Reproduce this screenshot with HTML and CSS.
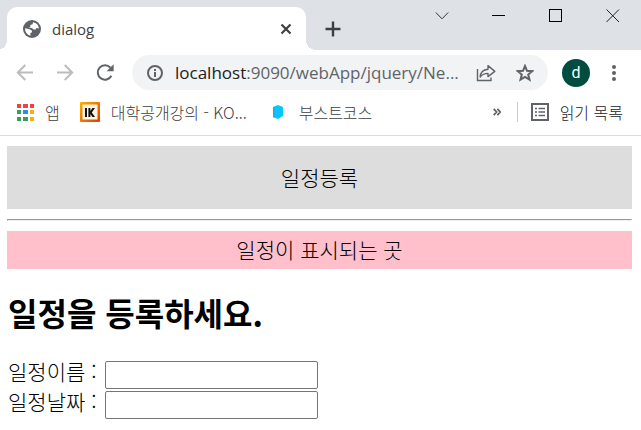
FILE: index.html
```html
<!DOCTYPE html>
<html lang="ko">
  <head>
    <meta charset="UTF-8" />
    <meta name="viewport" content="width=device-width, initial-scale=1.0" />
    <title>dialog</title>
    <link rel="stylesheet" href="styles.css">
  </head>
  <body>
    <header class="browser">
      <div class="tab-strip">
        <div class="tab">
          <svg class="tab-icon" width="18" height="18" viewBox="0 0 18 18">
            <circle cx="9" cy="9" r="9" fill="#5f6368" />
            <path d="M10 2.2 L9.6 4.2 L7.4 5 L7.2 7 L5.6 7.6 L8.8 8 L10.6 9.6 L12.6 9.6 L13.4 8 L15.9 8.4 A7 7 0 0 0 10 2.2Z" fill="#fff" />
            <path d="M2.1 8.3 L6.6 9.2 L8.8 10.6 L9 12.4 L7.4 12.8 L7.4 15.8 A7 7 0 0 1 2.1 8.3Z" fill="#fff" />
          </svg>
          <span class="tab-title">dialog</span>
          <button class="icon-btn" type="button" aria-label="Close tab">
            <svg width="12" height="12" viewBox="0 0 12 12">
              <path d="M1.5 1.5 L10.5 10.5 M10.5 1.5 L1.5 10.5" stroke="#3c4043" stroke-width="2.2" />
            </svg>
          </button>
        </div>
        <button class="icon-btn new-tab" type="button" aria-label="New tab">
          <svg width="16" height="16" viewBox="0 0 16 16">
            <path d="M8 .5 V15.5 M.5 8 H15.5" stroke="#3c4043" stroke-width="2.4" />
          </svg>
        </button>
        <div class="window-buttons">
          <button class="icon-btn" type="button" aria-label="Search tabs">
            <svg width="14" height="14" viewBox="0 0 14 14">
              <path d="M.8 3.5 L7 9.8 L13.2 3.5" fill="none" stroke="#333" />
            </svg>
          </button>
          <button class="icon-btn" type="button" aria-label="Minimize">
            <svg width="14" height="14" viewBox="0 0 14 14">
              <path d="M0 6.5 H13" stroke="#000" />
            </svg>
          </button>
          <button class="icon-btn" type="button" aria-label="Maximize">
            <svg width="14" height="14" viewBox="0 0 14 14">
              <rect x=".5" y=".5" width="12" height="12" fill="none" stroke="#000" />
            </svg>
          </button>
          <button class="icon-btn" type="button" aria-label="Close">
            <svg width="14" height="14" viewBox="0 0 14 14">
              <path d="M.5 .5 L13 13 M13 .5 L.5 13" stroke="#222" />
            </svg>
          </button>
        </div>
      </div>

      <div class="toolbar">
        <button class="icon-btn" type="button" aria-label="Back">
          <svg width="18" height="18" viewBox="0 0 18 18">
            <path d="M17 8.5 H2 M9.3 1 L1.8 8.5 L9.3 16" fill="none" stroke="#babcbe" stroke-width="2" />
          </svg>
        </button>
        <button class="icon-btn" type="button" aria-label="Forward">
          <svg width="18" height="18" viewBox="0 0 18 18">
            <path d="M1 8.5 H16 M8.7 1 L16.2 8.5 L8.7 16" fill="none" stroke="#babcbe" stroke-width="2" />
          </svg>
        </button>
        <button class="icon-btn" type="button" aria-label="Reload">
          <svg width="18" height="18" viewBox="0 0 18 18">
            <path d="M15.4 11.7 A7.2 7.2 0 1 1 14.4 3.7" fill="none" stroke="#5f6368" stroke-width="2" />
            <path d="M17.6 .3 V7.3 H10.6Z" fill="#5f6368" />
          </svg>
        </button>
        <div class="address">
          <svg width="16" height="16" viewBox="0 0 16 16">
            <circle cx="8" cy="8" r="7" fill="none" stroke="#5f6368" stroke-width="2" />
            <path d="M8 7 V12 M8 4 V6" stroke="#5f6368" stroke-width="2" />
          </svg>
          <span class="url">localhost<span class="path">:9090/webApp/jquery/Ne...</span></span>
          <button class="icon-btn" type="button" aria-label="Share">
            <svg width="20" height="18" viewBox="0 0 20 18">
              <path d="M1.5 5 V16.5 H15 V13.5" fill="none" stroke="#5f6368" stroke-width="1.4" />
              <path d="M4.2 13 C4.4 8.6 7 5.6 12 5.2 V1.6 L18.8 7.4 L12 12.6 V9.4 C8.4 9.4 6 10.6 4.2 13Z" fill="none" stroke="#5f6368" stroke-width="1.4" stroke-linejoin="round" />
            </svg>
          </button>
          <button class="icon-btn" type="button" aria-label="Bookmark this page">
            <svg width="18" height="18" viewBox="0 0 18 18">
              <path d="M9 2 L11 6.8 L16.2 7.2 L12.2 10.6 L13.5 15.7 L9 13 L4.5 15.7 L5.8 10.6 L1.8 7.2 L7 6.8Z" fill="none" stroke="#5f6368" stroke-width="2" />
            </svg>
          </button>
        </div>
        <button class="avatar" type="button">d</button>
        <button class="icon-btn" type="button" aria-label="Menu">
          <svg width="4" height="18" viewBox="0 0 4 18">
            <circle cx="2" cy="3" r="2" fill="#5f6368" />
            <circle cx="2" cy="9" r="2" fill="#5f6368" />
            <circle cx="2" cy="15" r="2" fill="#5f6368" />
          </svg>
        </button>
      </div>

      <nav class="bookmarks">
        <a href="#">
          <svg width="17" height="17" viewBox="0 0 17 17">
            <path d="M0 0 h4 v4 h-4z M6 0 h5 v4 h-5z M13 0 h4 v4 h-4z" fill="#f44040" />
            <path d="M0 6 h4 v4 h-4z M0 13 h4 v4 h-4z M6 13 h5 v4 h-5z" fill="#34a05c" />
            <path d="M6 6 h5 v4 h-5z" fill="#2a8cf0" />
            <path d="M13 6 h4 v4 h-4z M13 13 h4 v4 h-4z" fill="#fbae08" />
          </svg>
          앱
        </a>
        <a href="#">
          <svg width="20" height="20" viewBox="0 0 20 20">
            <defs>
              <linearGradient id="orange" x1="0" y1="0" x2="1" y2="1">
                <stop offset="0" stop-color="#ffb000" />
                <stop offset="1" stop-color="#e03c00" />
              </linearGradient>
            </defs>
            <rect width="20" height="20" rx="1" fill="url(#orange)" />
            <rect x="2.5" y="2.5" width="15" height="15" fill="#fff3e4" />
            <path d="M5 6 H7 V15 H5Z M8.4 6 H10.4 V9 L12.4 6 H15 L11.8 10.4 L15 15 H12.4 L10.4 12 V15 H8.4Z" fill="#111" />
          </svg>
          대학공개강의 - KO...
        </a>
        <a class="course" href="#">
          <svg width="10" height="14" viewBox="0 0 10 14">
            <path d="M0 2 L5 0 L10 2 V11 L5 14 L0 12Z" fill="#06c8ff" />
            <path d="M0 2 L2 2 V12.8 L0 12Z" fill="#1ab0f4" />
          </svg>
          부스트코스
        </a>
        <button class="icon-btn more" type="button" aria-label="More bookmarks">
          <svg width="8" height="8" viewBox="0 0 8 8">
            <path d="M.7 .8 L3.6 4 L.7 7.2 M4.4 .8 L7.3 4 L4.4 7.2" fill="none" stroke="#5f6368" stroke-width="1.8" />
          </svg>
        </button>
        <a class="reading-list" href="#">
          <svg width="18" height="18" viewBox="0 0 18 18">
            <rect x="1" y="1" width="16" height="16" fill="none" stroke="#5f6368" stroke-width="2" />
            <path d="M4 5.5 H6 M4 9 H6 M4 12.5 H6 M7.5 5.5 H14 M7.5 9 H14 M7.5 12.5 H14" stroke="#5f6368" stroke-width="1.6" />
          </svg>
          읽기 목록
        </a>
      </nav>
    </header>

    <main>
      <button class="add" type="button">일정등록</button>
      <hr />
      <div class="schedule">일정이 표시되는 곳</div>
      <h2>일정을 등록하세요.</h2>
      <form>
        <div class="field">
          <label for="name">일정이름 :</label>
          <input type="text" id="name" />
        </div>
        <div class="field">
          <label for="date">일정날짜 :</label>
          <input type="text" id="date" />
        </div>
      </form>
    </main>
  </body>
</html>
```
FILE: styles.css
```css
* {
  box-sizing: border-box;
}

body {
  margin: 0;
  background-color: white;
  color: black;
  font-family: "Noto Sans CJK KR", sans-serif;
  font-weight: 300;
}

svg {
  display: block;
  flex-shrink: 0;
}

button {
  font-family: inherit;
  font-weight: inherit;
  border: none;
  padding: 0;
  cursor: pointer;
}

.icon-btn {
  background: none;
}

.tab-strip {
  display: flex;
  height: 50px;
  padding-left: 7px;
  background-color: #dee1e6;
}

.tab {
  position: relative;
  display: flex;
  align-items: center;
  width: 299px;
  margin-top: 7px;
  padding: 0 14px 0 16px;
  background-color: white;
  border-radius: 10px 10px 0 0;
}

/* curved feet of the active tab */
.tab::before,
.tab::after {
  content: "";
  position: absolute;
  bottom: 0;
  width: 10px;
  height: 10px;
}

.tab::before {
  right: 100%;
  background: radial-gradient(circle at 0 0, transparent 10px, white 10px);
}

.tab::after {
  left: 100%;
  background: radial-gradient(circle at 100% 0, transparent 10px, white 10px);
}

.tab-title {
  flex: 1;
  margin-left: 11px;
  color: #3c4043;
  font-family: "Open Sans", sans-serif;
  font-size: 15px;
  font-weight: 400;
}

.new-tab {
  margin: 7px 0 0 19px;
}

.window-buttons {
  display: flex;
  gap: 43px;
  height: 32px;
  margin-left: auto;
  padding-right: 21px;
}

.toolbar {
  display: flex;
  align-items: center;
  height: 45px;
  padding: 0 25px 0 16px;
}

.toolbar > .icon-btn {
  margin-right: 22px;
}

.toolbar > .icon-btn:last-child {
  margin-right: 0;
}

.address {
  flex: 1;
  display: flex;
  align-items: center;
  min-width: 0;
  height: 35px;
  margin: 0 14px 0 -4px;
  padding: 0 14px 0 15px;
  background-color: #f1f3f4;
  border-radius: 18px;
}

.url {
  flex: 1;
  min-width: 0;
  margin-left: 12px;
  overflow: hidden;
  white-space: nowrap;
  color: #202124;
  font-family: "Open Sans", sans-serif;
  font-size: 17px;
  font-weight: 400;
}

.path {
  color: #5f6368;
}

.address .icon-btn + .icon-btn {
  margin-left: 20px;
}

.avatar {
  width: 28px;
  height: 28px;
  margin-right: 22px;
  background-color: #004d40;
  border-radius: 50%;
  color: white;
  font-family: Roboto, sans-serif;
  font-size: 16px;
  font-weight: 400;
}

.bookmarks {
  display: flex;
  align-items: center;
  height: 41px;
  padding: 0 18px 6px 17px;
  border-bottom: 1px solid #dadce0;
}

.bookmarks a {
  display: flex;
  align-items: center;
  gap: 11px;
  margin-right: 20px;
  color: #3c4043;
  font-size: 16px;
  line-height: 20px;
  text-decoration: none;
  white-space: nowrap;
}

.bookmarks .course {
  gap: 16px;
  margin: 0 0 0 6px;
}

.more {
  margin: 0 16px 0 auto;
}

.bookmarks .reading-list {
  margin-right: 0;
  padding-left: 13px;
  border-left: 1px solid #c8cacd;
  color: #202124;
}

main {
  padding: 10px 9px 8px 7px;
  font-size: 21px;
  line-height: 30px;
}

.add {
  display: block;
  width: 100%;
  padding: 16px 16px 17px;
  background-color: #ddd;
  color: black;
  font-size: 21px;
  line-height: 30px;
}

hr {
  margin: 10px 0;
}

.schedule {
  padding: 3px 4px 5px;
  background-color: pink;
  text-align: center;
}

h2 {
  margin: 20px 0 25px;
  padding-left: 1px;
  font-size: 32px;
  font-weight: 700;
  line-height: 46px;
}

form {
  padding-left: 1px;
}

.field {
  display: flex;
  align-items: center;
  height: 30px;
}

.field label {
  width: 97px;
  padding-bottom: 8px;
}

.field input {
  width: 213px;
  height: 28px;
  padding: 1px 4px;
  border: 1px solid #767676;
  border-radius: 2px;
  font-size: 18px;
}
```
